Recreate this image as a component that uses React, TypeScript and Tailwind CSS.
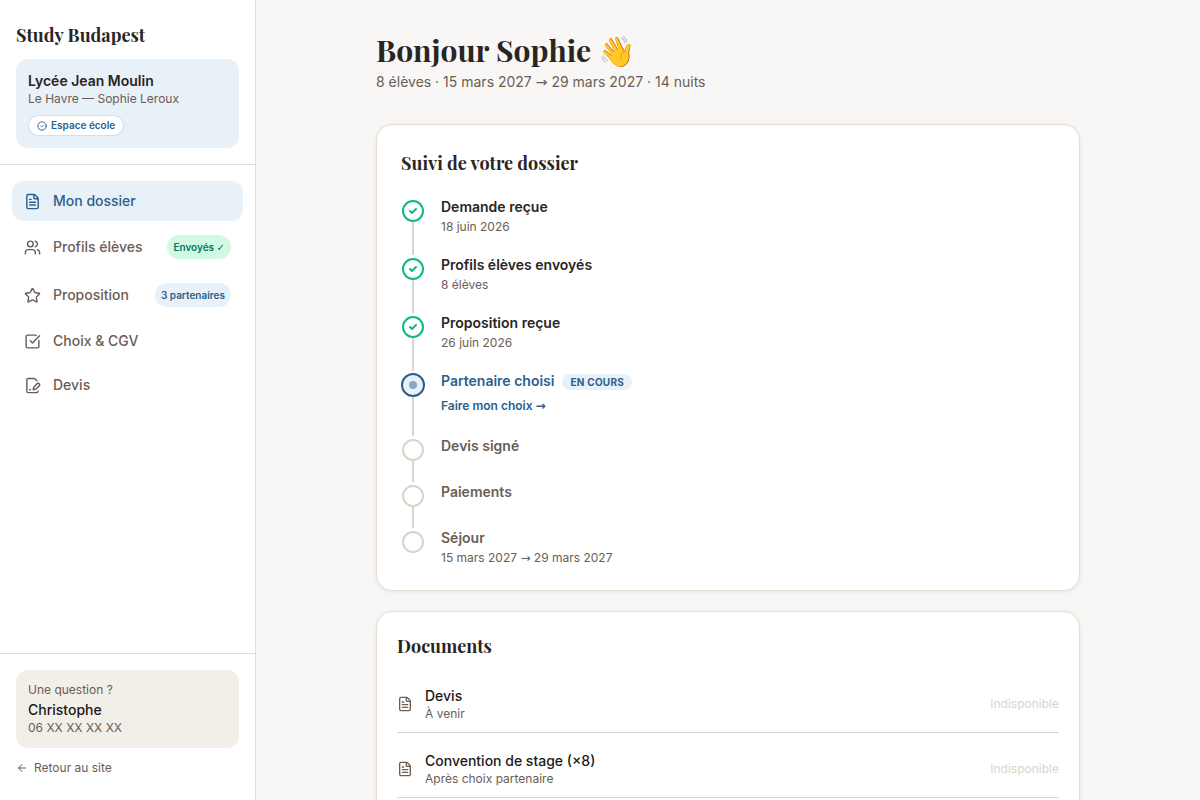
import React from "react";
import {
  ArrowLeft,
  CircleCheck,
  FilePenLine,
  FileText,
  SquareCheckBig,
  Star,
  Users,
  type LucideIcon,
} from "lucide-react";
import clsx from "clsx";

type NavItem = {
  label: string;
  icon: LucideIcon;
  active?: boolean;
  badge?: React.ReactNode;
  badgeTone?: "green" | "blue";
};

type Step = {
  label: string;
  detail?: React.ReactNode;
  status: "done" | "current" | "todo";
  action?: React.ReactNode;
};

// flèches et coches : glyphes pris hors de la police de texte
const Glyph: React.FC<{ children: string }> = ({ children }) => (
  <span className="font-['DejaVu_Sans',sans-serif] leading-none">{children}</span>
);

const NAV: NavItem[] = [
  { label: "Mon dossier", icon: FileText, active: true },
  { label: "Profils élèves", icon: Users, badge: <>Envoyés <Glyph>✓</Glyph></>, badgeTone: "green" },
  { label: "Proposition", icon: Star, badge: "3 partenaires", badgeTone: "blue" },
  { label: "Choix & CGV", icon: SquareCheckBig },
  { label: "Devis", icon: FilePenLine },
];

const STEPS: Step[] = [
  { label: "Demande reçue", detail: "18 juin 2026", status: "done" },
  { label: "Profils élèves envoyés", detail: "8 élèves", status: "done" },
  { label: "Proposition reçue", detail: "26 juin 2026", status: "done" },
  { label: "Partenaire choisi", status: "current", action: <>Faire mon choix <Glyph>→</Glyph></> },
  { label: "Devis signé", status: "todo" },
  { label: "Paiements", status: "todo" },
  { label: "Séjour", detail: <>15 mars 2027 <Glyph>→</Glyph> 29 mars 2027</>, status: "todo" },
];

const DOCUMENTS = [
  { title: "Devis", info: "À venir" },
  { title: "Convention de stage (×8)", info: "Après choix partenaire" },
];

const Heading: React.FC<{ as?: "h1" | "h2" | "p"; className?: string; children: React.ReactNode }> = ({
  as: Tag = "h2",
  className,
  children,
}) => (
  <Tag className={clsx("font-['Playfair_Display','Liberation_Serif',serif] font-bold text-[#292524]", className)}>
    {children}
  </Tag>
);

const Sidebar: React.FC = () => (
  <aside className="flex w-64 shrink-0 flex-col border-r border-[#e5ddd0] bg-white">
    <div className="border-b border-[#e5ddd0] px-4 pt-5 pb-4">
      <Heading as="p" className="text-lg leading-[31px]">
        Study Budapest
      </Heading>
      <div className="mt-2 rounded-xl bg-[#e8f0f8] p-3">
        <p className="text-sm leading-5 font-semibold text-[#292524]">Lycée Jean Moulin</p>
        <p className="text-xs leading-4 text-[#6b5d54]">Le Havre — Sophie Leroux</p>
        <span className="mt-2 flex h-[21px] w-fit items-center gap-1 rounded-full border border-[#2c5f8d]/20 bg-white px-2 text-[10px] font-semibold text-[#2c5f8d]">
          <CircleCheck size={10} strokeWidth={2.25} />
          Espace école
        </span>
      </div>
    </div>

    <nav className="flex flex-1 flex-col gap-1 px-3 py-4">
      {NAV.map(({ label, icon: Icon, active, badge, badgeTone }) => (
        <a
          key={label}
          href="#"
          className={clsx(
            "flex items-center gap-3 rounded-xl px-3 py-2.5 text-sm font-medium",
            active ? "bg-[#e8f0f8] text-[#2c5f8d]" : "text-[#6b5d54]"
          )}
        >
          <Icon size={17} className="shrink-0" />
          <span className="flex-1">{label}</span>
          {badge && (
            <span
              className={clsx(
                "rounded-full px-1.5 py-0.5 text-[10px] leading-5 font-semibold",
                badgeTone === "green" ? "bg-[#d1fae5] text-[#047857]" : "bg-[#e8f0f8] text-[#2c5f8d]"
              )}
            >
              {badge}
            </span>
          )}
        </a>
      ))}
    </nav>

    <div className="border-t border-[#e5ddd0] px-4 pt-4 pb-6">
      <div className="rounded-xl bg-[#f2efe9] p-3 text-[#6b5d54]">
        <p className="mb-0.5 text-xs leading-4">Une question ?</p>
        <p className="text-sm leading-5 font-medium text-[#1c1917]">Christophe</p>
        <p className="text-xs leading-4">06 XX XX XX XX</p>
      </div>
      <a href="#" className="mt-3 flex items-center gap-1.5 text-xs leading-4 text-[#6b5d54]">
        <ArrowLeft size={12} />
        Retour au site
      </a>
    </div>
  </aside>
);

const StepMarker: React.FC<{ status: Step["status"] }> = ({ status }) => {
  if (status === "current") {
    return (
      <span className="grid size-6 shrink-0 place-items-center rounded-full border-2 border-[#2c5f8d] bg-[#e8f0f8]">
        <span className="size-2 rounded-full bg-[#2c5f8d]/50" />
      </span>
    );
  }
  return (
    <span
      className={clsx(
        "mt-px grid size-[22px] shrink-0 place-items-center rounded-full border-2 bg-white",
        status === "done" ? "border-[#10b981] text-[#10b981]" : "border-[#dcd3ca]"
      )}
    >
      {status === "done" && (
        <svg className="size-2.5" fill="none" viewBox="0 0 10 10" stroke="currentColor">
          <path strokeLinecap="round" strokeLinejoin="round" strokeWidth={2} d="M2 5l2 2 4-4" />
        </svg>
      )}
    </span>
  );
};

const Timeline: React.FC = () => (
  <ol>
    {STEPS.map((step, index) => {
      const last = index === STEPS.length - 1;
      return (
        <li key={step.label} className="flex gap-4">
          <div className="flex w-6 flex-col items-center">
            <StepMarker status={step.status} />
            {!last && <span className="mb-0.5 w-0.5 flex-1 bg-[#dcd3ca]" />}
          </div>
          <div
            className={clsx(
              !last && step.status === "done" && "pb-[22px]",
              !last && step.status === "todo" && "pb-[26px]",
              step.action && "pb-6"
            )}
          >
            <div className="-mt-1 flex items-center gap-2">
              <p
                className={clsx(
                  "text-sm leading-6 font-semibold",
                  step.status === "done" && "text-[#292524]",
                  step.status === "current" && "text-[#2c5f8d]",
                  step.status === "todo" && "text-[#6b5d54]"
                )}
              >
                {step.label}
              </p>
              {step.status === "current" && (
                <span className="mt-0.5 rounded-full bg-[#e8f0f8] px-2 text-[10px] leading-4 font-bold tracking-wide text-[#2c5f8d]">
                  EN COURS
                </span>
              )}
            </div>
            {step.detail && <p className="text-xs leading-4 text-[#6b5d54]">{step.detail}</p>}
            {step.action && (
              <a href="#" className="mt-[5px] block text-xs leading-4 font-semibold text-[#2c5f8d]">
                {step.action}
              </a>
            )}
          </div>
        </li>
      );
    })}
  </ol>
);

const Documents: React.FC = () => (
  <ul className="space-y-2">
    {DOCUMENTS.map((doc) => (
      <li key={doc.title} className="flex items-center gap-3 border-b border-[#ddd4c7] py-2.5">
        <FileText size={16} className="shrink-0 text-[#6b5d54]" />
        <div className="flex-1">
          <p className="text-sm leading-5 font-medium text-[#1c1917]">{doc.title}</p>
          <p className="text-xs leading-4 text-[#6b5d54]">{doc.info}</p>
        </div>
        <span className="text-xs text-[#dcd3ca]">Indisponible</span>
      </li>
    ))}
  </ul>
);

export default function App() {
  return (
    <div className="flex h-screen overflow-hidden bg-[#f8f7f5] font-['Inter',sans-serif]">
      <Sidebar />
      <main className="flex-1 overflow-hidden">
        <div className="mx-auto max-w-3xl px-8 pt-8">
          <header className="mb-8">
            <Heading as="h1" className="text-[30px] leading-9">
              Bonjour Sophie 👋
            </Heading>
            <p className="mt-1 text-sm leading-5 text-[#6b5d54]">
              8 élèves · 15 mars 2027 <Glyph>→</Glyph> 29 mars 2027 · 14 nuits
            </p>
          </header>

          <section className="mb-5 rounded-2xl border border-[#e5ddd0] bg-white p-6 shadow-[0_1px_4px_rgba(0,0,0,0.08)]">
            <Heading className="mb-[22px] text-lg leading-7">Suivi de votre dossier</Heading>
            <Timeline />
          </section>

          <section className="rounded-2xl border border-[#e5ddd0] bg-white p-5 pb-10 shadow-[0_1px_4px_rgba(0,0,0,0.08)]">
            <Heading className="mb-4 text-lg leading-7">Documents</Heading>
            <Documents />
          </section>
        </div>
      </main>
    </div>
  );
}
